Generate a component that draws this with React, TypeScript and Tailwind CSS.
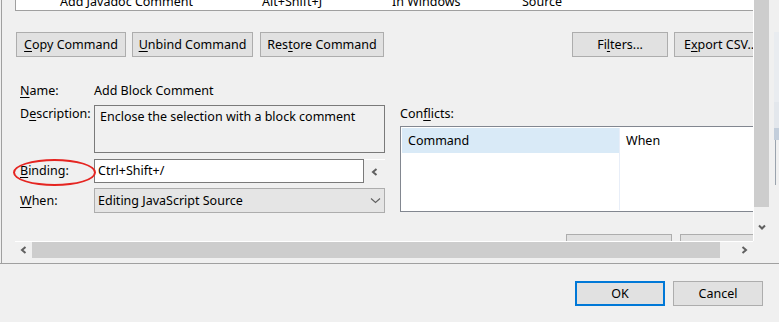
import type { ReactNode } from 'react'

const U = ({ children }: { children: ReactNode }) => (
  <span className="underline decoration-1 underline-offset-2">{children}</span>
)

const Btn = ({ w, children }: { w: string; children: ReactNode }) => (
  <div
    className={`flex h-[25px] shrink-0 items-center justify-center border border-[#adadad] bg-[#e1e1e1] ${w}`}
  >
    {children}
  </div>
)

const ChevLeft = () => (
  <svg width="8" height="8" viewBox="0 0 8 8">
    <polyline points="5.5,1 2,4 5.5,7" fill="none" stroke="#606060" strokeWidth="2" />
  </svg>
)

const ChevRight = () => (
  <svg width="8" height="8" viewBox="0 0 8 8">
    <polyline points="2.5,1 6,4 2.5,7" fill="none" stroke="#606060" strokeWidth="2" />
  </svg>
)

const ChevDownBold = () => (
  <svg width="8" height="8" viewBox="0 0 8 8">
    <polyline points="1,2.5 4,5.5 7,2.5" fill="none" stroke="#606060" strokeWidth="2" />
  </svg>
)

const ChevDownThin = () => (
  <svg width="11" height="7" viewBox="0 0 11 7">
    <polyline points="1,1.5 5.5,5.5 10,1.5" fill="none" stroke="#606060" strokeWidth="1.1" />
  </svg>
)

export default function App() {
  return (
    <div className="relative flex h-[322px] w-[779px] flex-col overflow-hidden bg-[#f0f0f0] font-['Noto_Sans',sans-serif] text-[12.5px] leading-[16px] text-black">
      {/* scrolled preference panel */}
      <div className="flex h-[264px] shrink-0 border-b border-[#a0a0a0]">
        <div className="ml-px flex w-[768px] flex-col border-l border-[#a0a0a0]">
          <div className="flex h-[241px]">
            {/* viewport */}
            <div className="flex w-[752px] flex-col overflow-hidden border-r border-white">
              {/* key binding table, scrolled to its last row */}
              <div className="ml-[13px] flex h-[11px] w-[760px] shrink-0 overflow-hidden border-b border-l border-[#a0a0a0] bg-white">
                <div className="mt-[-6px] flex whitespace-nowrap">
                  <span className="w-[44px]" />
                  <span className="w-[202px]">Add Javadoc Comment</span>
                  <span className="w-[130px]">Alt+Shift+J</span>
                  <span className="w-[130px]">In Windows</span>
                  <span>Source</span>
                </div>
              </div>

              {/* command buttons */}
              <div className="ml-[14px] mt-[21px] flex shrink-0">
                <Btn w="w-[110px]">
                  <span>
                    <U>C</U>opy Command
                  </span>
                </Btn>
                <Btn w="w-[121px] ml-[6px]">
                  <span>
                    <U>U</U>nbind Command
                  </span>
                </Btn>
                <Btn w="w-[124px] ml-[7px]">
                  <span>
                    Res<U>t</U>ore Command
                  </span>
                </Btn>
                <Btn w="w-[96px] ml-[188px]">
                  <span>
                    Fi<U>l</U>ters...
                  </span>
                </Btn>
                <Btn w="w-[96px] ml-[6px] justify-start pl-[9px]">
                  <span className="whitespace-nowrap">
                    E<U>x</U>port CSV...
                  </span>
                </Btn>
              </div>

              {/* details */}
              <div className="relative ml-[18px] mt-[25px] flex shrink-0">
                <div className="flex w-[365px] flex-col">
                  <div className="flex h-[18px] items-center">
                    <span className="w-[74px]">
                      <U>N</U>ame:
                    </span>
                    <span>Add Block Comment</span>
                  </div>
                  <div className="mt-[5px] flex">
                    <span className="w-[74px] pt-[1px]">
                      D<U>e</U>scription:
                    </span>
                    <div className="h-[48px] w-[291px] border border-[#7a7a7a] px-[5px] pt-[3px]">
                      Enclose the selection with a block comment
                    </div>
                  </div>
                  <div className="mt-[6px] flex h-[24px] items-center">
                    <span className="w-[74px]">
                      <U>B</U>inding:
                    </span>
                    <div className="flex h-[24px] w-[270px] items-center border border-[#7a7a7a] bg-white px-[3px]">
                      Ctrl+Shift+/
                    </div>
                    <div className="flex h-[24px] w-[21px] items-center justify-center border-t border-white">
                      <ChevLeft />
                    </div>
                  </div>
                  <div className="mt-[5px] flex h-[25px] items-center">
                    <span className="w-[74px]">
                      <U>W</U>hen:
                    </span>
                    <div className="flex h-[25px] w-[291px] items-center justify-between border border-[#adadad] bg-[#e5e5e5] pl-[3px] pr-[3px]">
                      <span>Editing JavaScript Source</span>
                      <ChevDownThin />
                    </div>
                  </div>
                </div>

                <div className="ml-[15px] flex w-[400px] shrink-0 flex-col">
                  <div className="mt-[24px] h-[16px]">
                    Con<U>f</U>licts:
                  </div>
                  <div className="mt-[4px] flex h-[86px] w-[400px] border border-[#828790] bg-white p-px">
                    <div className="flex h-[25px] w-[217px] items-center bg-[#d9eaf7] pl-[6px]">
                      Command
                    </div>
                    <div className="flex h-full flex-col">
                      <div className="flex h-[25px] items-center border-l border-[#e8eef8] pl-[6px]">
                        When
                      </div>
                      <div className="flex-1 border-l border-[#e8eef8]" />
                    </div>
                  </div>
                </div>

                {/* annotation */}
                <div className="absolute left-[-7px] top-[77px] h-[27px] w-[83px] rounded-[50%] border-2 border-[#e52521]" />
              </div>

              {/* buttons below, cut by the scrollbar */}
              <div className="ml-[564px] mt-[21px] flex shrink-0 gap-[8px]">
                <div className="h-[25px] w-[106px] shrink-0 border border-[#adadad] bg-[#e1e1e1]" />
                <div className="h-[25px] w-[96px] shrink-0 border border-[#adadad] bg-[#e1e1e1]" />
              </div>
            </div>

            {/* vertical scrollbar */}
            <div className="flex w-[15px] flex-col">
              <div className="h-[207px] bg-[#cdcdcd]" />
              <div className="flex flex-1 items-center justify-center pt-[5px]">
                <ChevDownBold />
              </div>
            </div>
          </div>

          {/* horizontal scrollbar */}
          <div className="ml-[13px] flex h-[17px] w-[738px] border-t border-white">
            <div className="flex w-[17px] items-center justify-center">
              <ChevLeft />
            </div>
            <div className="w-[688px] bg-[#cdcdcd]" />
            <div className="flex flex-1 items-center justify-end pr-[5px]">
              <ChevRight />
            </div>
          </div>
        </div>

        {/* edge of the window behind */}
        <div className="ml-[5px] flex flex-1 flex-col">
          <div className="mt-[32px] h-[70px] bg-[#e9ecf0]" />
          <div className="h-[26px] bg-[#e3e7ec]" />
          <div className="h-[12px] bg-[#c3cedb]" />
          <div className="ml-px h-[45px] w-px bg-[#9aa3ad]" />
        </div>
      </div>

      {/* dialog buttons */}
      <div className="flex justify-end gap-[8px] pr-[16px] pt-[17px]">
        <div className="flex h-[25px] w-[90px] items-center justify-center border-2 border-[#0078d7] bg-[#e1e1e1]">
          OK
        </div>
        <div className="flex h-[25px] w-[90px] items-center justify-center border border-[#adadad] bg-[#e1e1e1]">
          Cancel
        </div>
      </div>
    </div>
  )
}
